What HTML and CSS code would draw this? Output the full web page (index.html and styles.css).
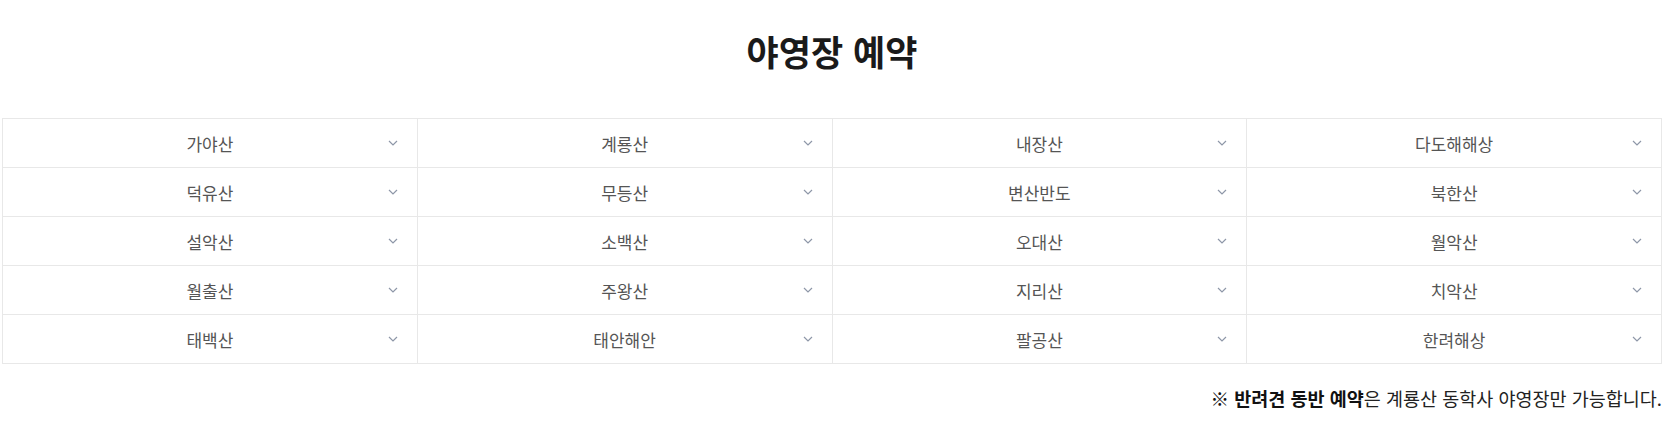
FILE: index.html
```html
<!DOCTYPE html>
<html lang="ko">
<head>
<meta charset="utf-8">
<title>야영장 예약</title>
<link rel="stylesheet" href="styles.css">
</head>
<body>
<div class="page">
  <h1 class="title">야영장 예약</h1>
  <div class="grid">
    <div class="cell"><span class="name">가야산</span><svg class="chev" viewBox="0 0 10 6"><path d="M1 1l4 4 4-4"/></svg></div>
    <div class="cell"><span class="name">계룡산</span><svg class="chev" viewBox="0 0 10 6"><path d="M1 1l4 4 4-4"/></svg></div>
    <div class="cell"><span class="name">내장산</span><svg class="chev" viewBox="0 0 10 6"><path d="M1 1l4 4 4-4"/></svg></div>
    <div class="cell"><span class="name">다도해해상</span><svg class="chev" viewBox="0 0 10 6"><path d="M1 1l4 4 4-4"/></svg></div>
    <div class="cell"><span class="name">덕유산</span><svg class="chev" viewBox="0 0 10 6"><path d="M1 1l4 4 4-4"/></svg></div>
    <div class="cell"><span class="name">무등산</span><svg class="chev" viewBox="0 0 10 6"><path d="M1 1l4 4 4-4"/></svg></div>
    <div class="cell"><span class="name">변산반도</span><svg class="chev" viewBox="0 0 10 6"><path d="M1 1l4 4 4-4"/></svg></div>
    <div class="cell"><span class="name">북한산</span><svg class="chev" viewBox="0 0 10 6"><path d="M1 1l4 4 4-4"/></svg></div>
    <div class="cell"><span class="name">설악산</span><svg class="chev" viewBox="0 0 10 6"><path d="M1 1l4 4 4-4"/></svg></div>
    <div class="cell"><span class="name">소백산</span><svg class="chev" viewBox="0 0 10 6"><path d="M1 1l4 4 4-4"/></svg></div>
    <div class="cell"><span class="name">오대산</span><svg class="chev" viewBox="0 0 10 6"><path d="M1 1l4 4 4-4"/></svg></div>
    <div class="cell"><span class="name">월악산</span><svg class="chev" viewBox="0 0 10 6"><path d="M1 1l4 4 4-4"/></svg></div>
    <div class="cell"><span class="name">월출산</span><svg class="chev" viewBox="0 0 10 6"><path d="M1 1l4 4 4-4"/></svg></div>
    <div class="cell"><span class="name">주왕산</span><svg class="chev" viewBox="0 0 10 6"><path d="M1 1l4 4 4-4"/></svg></div>
    <div class="cell"><span class="name">지리산</span><svg class="chev" viewBox="0 0 10 6"><path d="M1 1l4 4 4-4"/></svg></div>
    <div class="cell"><span class="name">치악산</span><svg class="chev" viewBox="0 0 10 6"><path d="M1 1l4 4 4-4"/></svg></div>
    <div class="cell"><span class="name">태백산</span><svg class="chev" viewBox="0 0 10 6"><path d="M1 1l4 4 4-4"/></svg></div>
    <div class="cell"><span class="name">태안해안</span><svg class="chev" viewBox="0 0 10 6"><path d="M1 1l4 4 4-4"/></svg></div>
    <div class="cell"><span class="name">팔공산</span><svg class="chev" viewBox="0 0 10 6"><path d="M1 1l4 4 4-4"/></svg></div>
    <div class="cell"><span class="name">한려해상</span><svg class="chev" viewBox="0 0 10 6"><path d="M1 1l4 4 4-4"/></svg></div>
  </div>
  <p class="note"><strong>※ 반려견 동반 예약</strong>은 계룡산 동학사 야영장만 가능합니다.</p>
</div>
</body>
</html>
```
FILE: styles.css
```css
html, body {
  margin: 0;
  padding: 0;
  background: #fff;
}
body {
  font-family: "Noto Sans CJK KR", "Noto Sans", sans-serif;
  color: #222;
}
.page {
  width: 1660px;
  padding: 29px 0 0 2px;
}
.title {
  margin: 0;
  text-align: center;
  font-size: 35px;
  line-height: 44px;
  font-weight: 700;
  color: #1a1a1a;
}
.grid {
  margin-top: 45px;
  display: grid;
  grid-template-columns: repeat(4, 1fr);
  border-top: 1px solid #e8e8e8;
  border-left: 1px solid #e8e8e8;
}
.cell {
  position: relative;
  height: 48px;
  display: flex;
  align-items: center;
  justify-content: center;
  border-right: 1px solid #e8e8e8;
  border-bottom: 1px solid #e8e8e8;
}
.name {
  font-size: 17px;
  color: #555;
}
.chev {
  position: absolute;
  right: 19px;
  top: 21px;
  width: 10px;
  height: 6px;
  fill: none;
  stroke: #8e97a8;
  stroke-width: 1.2;
}
.note {
  margin: 22px 0 0;
  text-align: right;
  font-size: 18.5px;
  line-height: 24px;
  color: #222;
}
.note strong {
  font-weight: 700;
  color: #111;
}
```
